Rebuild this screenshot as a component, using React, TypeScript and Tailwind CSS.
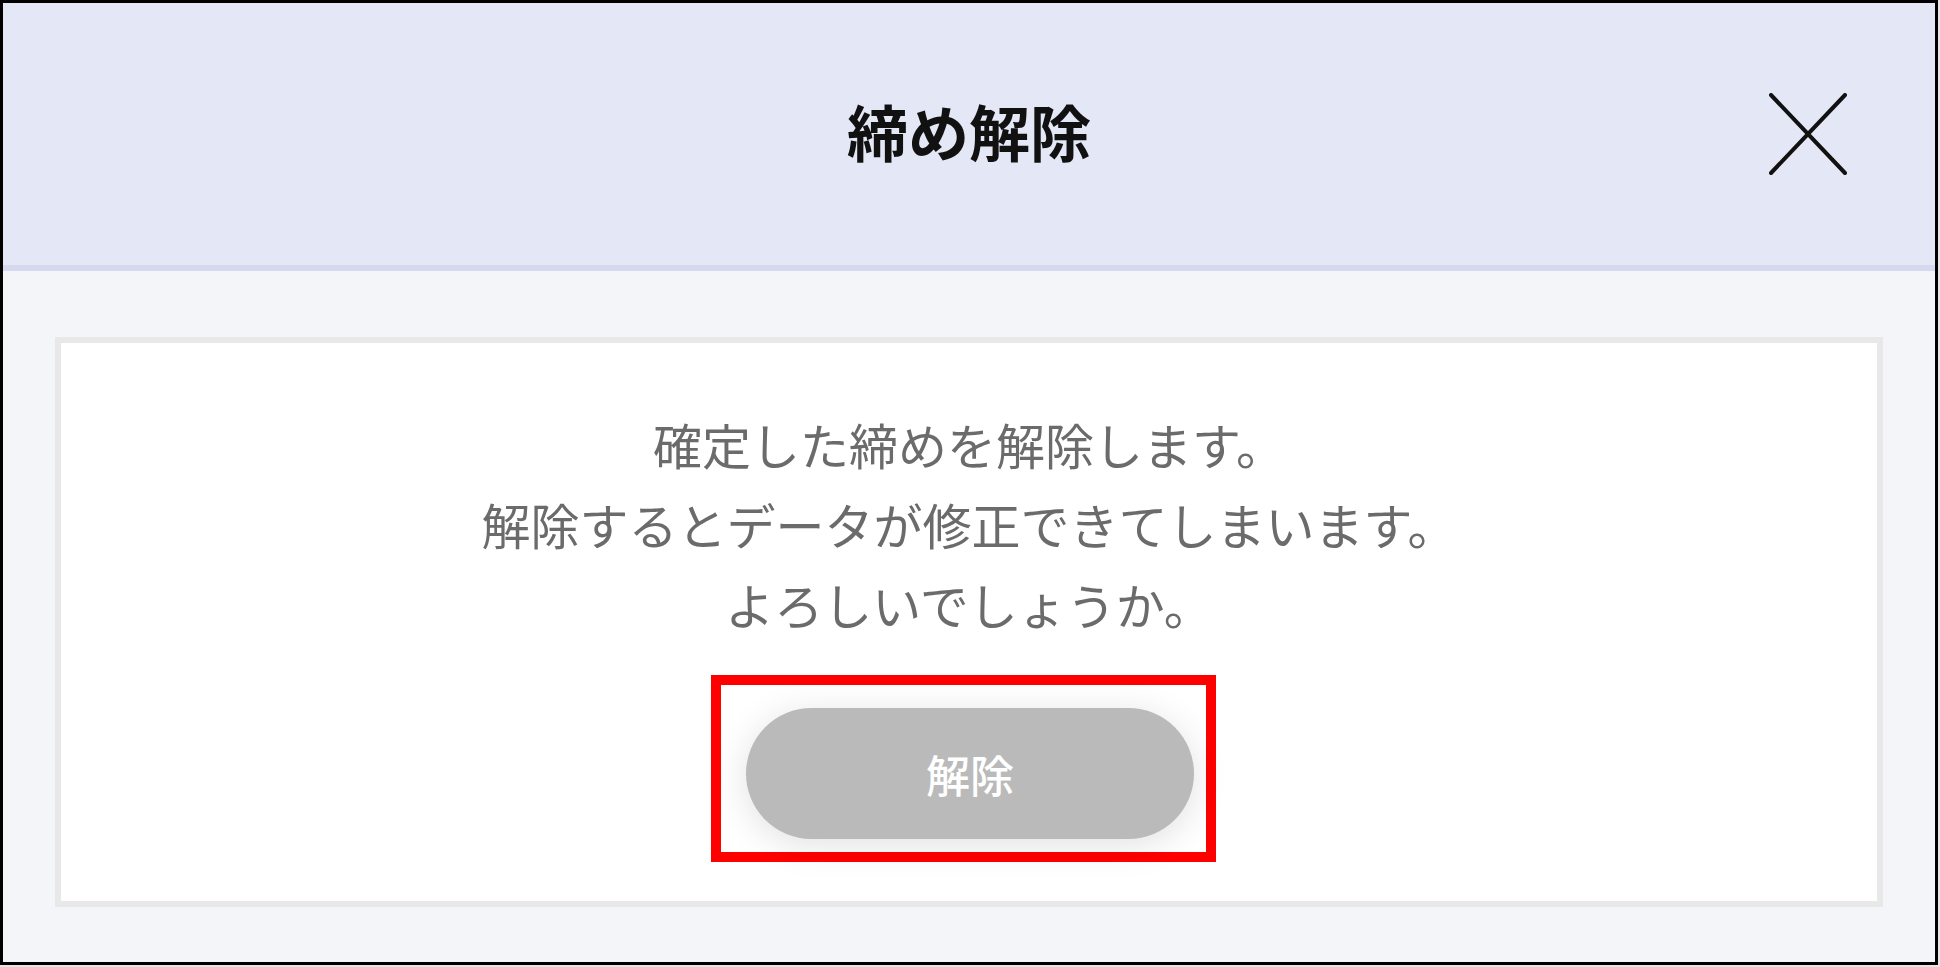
import React from 'react';

const font = { fontFamily: '"Noto Sans CJK JP", "Noto Sans", sans-serif' };

const CloseIcon = () => (
  <svg width="78" height="82" viewBox="0 0 78 82" fill="none">
    <path d="M2 2 L76 80 M76 2 L2 80" stroke="#111" strokeWidth="4" strokeLinecap="round" />
  </svg>
);

const UnlockDialog = () => {
  return (
    <div className="w-[1938px] h-[965px] border-[3px] border-black flex flex-col" style={font}>
      <div className="relative h-[268px] shrink-0 bg-[#e4e8f6] border-b-[6px] border-[#d5d8ef] flex items-center justify-center">
        <h1 className="text-[61px] font-bold text-[#111] leading-none pb-[8px]">締め解除</h1>
        <button className="absolute right-[88px] top-[90px]">
          <CloseIcon />
        </button>
      </div>
      <div className="flex-1 bg-[#f4f5f9] px-[52px] pt-[66px] pb-[55px]">
        <div className="h-full bg-white border-[6px] border-[#e8e8e8] flex flex-col items-center pt-[61px]">
          <div className="text-center text-[49px] leading-[80px] text-[#6b6b6b]">
            <p>確定した締めを解除します。</p>
            <p>解除するとデータが修正できてしまいます。</p>
            <p>よろしいでしょうか。</p>
          </div>
          <div className="mt-[31px] mr-[11px] border-[10px] border-[#ff0000] pl-[25px] pr-[12px] pt-[23px] pb-[13px]">
            <button className="w-[448px] h-[131px] rounded-full bg-[#bababa] text-white text-[44px] font-medium shadow-[0_6px_36px_rgba(0,0,0,0.12)]">
              解除
            </button>
          </div>
        </div>
      </div>
    </div>
  );
};

export default function App() {
  return (
    <div className="w-[1940px] h-[967px] bg-[#e6e6e6]">
      <UnlockDialog />
    </div>
  );
}
